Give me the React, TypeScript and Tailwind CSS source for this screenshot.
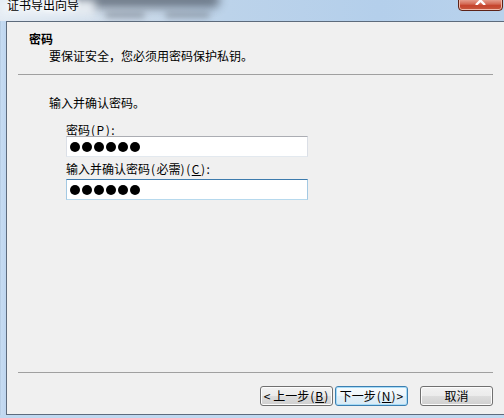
import React from "react";

const font = "font-['Noto_Sans_CJK_SC','Noto_Sans',sans-serif]";

function Dots() {
  return (
    <div className="flex items-center gap-[2px]">
      {[0, 1, 2, 3, 4, 5].map((i) => (
        <div key={i} className="w-[10px] h-[10px] rounded-full bg-black" />
      ))}
    </div>
  );
}

function Btn({ children, primary }: { children: React.ReactNode; primary?: boolean }) {
  return (
    <div
      className={
        primary
          ? "w-[73px] h-[20px] rounded-[3px] border border-[#3c7fb1] shadow-[inset_0_0_0_1px_#a6dbf7] bg-[linear-gradient(to_bottom,#f7fbfd_0%,#eef6fb_50%,#e2eff7_51%,#d9eaf5_100%)] flex items-center justify-center text-[12px] leading-[12px] text-black"
          : "w-[73px] h-[20px] rounded-[3px] border border-[#707070] shadow-[inset_0_0_0_1px_#fcfcfc] bg-[linear-gradient(to_bottom,#f2f2f2_0%,#ebebeb_50%,#dddddd_51%,#cfcfcf_100%)] flex items-center justify-center text-[12px] leading-[12px] text-black"
      }
    >
      {children}
    </div>
  );
}

export default function App() {
  return (
    <div className={`w-[504px] h-[418px] overflow-hidden flex flex-col bg-[#bcd5ee] ${font}`}>
      {/* title bar */}
      <div className="relative h-[21px] shrink-0 overflow-hidden bg-[linear-gradient(to_right,#e2eaf3_0%,#cbd9e8_25%,#bcd3ea_45%,#b4cfeb_75%,#b8d2ec_100%)]">
        <div className="absolute left-[70px] top-[-8px] w-[150px] h-[16px] rounded-full bg-[#5a6573] blur-[5px] opacity-80" />
        <div className="absolute left-[105px] top-[12px] w-[40px] h-[6px] rounded-full bg-[#7d8794] blur-[3px] opacity-70" />
        <div className="absolute left-[165px] top-[12px] w-[45px] h-[6px] rounded-full bg-[#7d8794] blur-[3px] opacity-70" />
        <div className="absolute left-0 top-0 w-[95px] h-[16px] bg-[#eef3f8] blur-[4px] opacity-90" />
        <div className="relative pl-[7px] mt-[-1px] text-[12px] leading-[12px] text-black [text-shadow:0_0_5px_white,0_0_5px_white]">
          证书导出向导
        </div>
        {/* close button */}
        <div className="absolute left-[458px] top-[-2px] w-[45px] h-[13px] rounded-b-[4px] border border-[#5c2318] bg-[linear-gradient(to_bottom,#e9a899_0%,#d46a55_45%,#c5432c_60%,#c85a40_100%)] shadow-[inset_0_0_0_1px_#f0b7a8]">
          <svg className="absolute left-[16px] top-[-3px]" width="11" height="9" viewBox="0 0 11 9">
            <path d="M1 0 L10 9 M10 0 L1 9" stroke="white" strokeWidth="2.4" />
          </svg>
        </div>
      </div>

      {/* body row */}
      <div className="flex h-[394px] shrink-0">
        <div className="w-[6px] shrink-0 bg-[linear-gradient(to_right,#a9c0d8_0px,#c7dcf2_1px,#bfd6ef_5px)]" />
        <div className="flex-1 flex flex-col border-l border-t border-b border-[#5d6b7c] bg-[#f0f0f0] text-[12px] leading-[12px] text-black">
          <div className="pt-[11px] pl-[22px] font-bold">密码</div>
          <div className="mt-[5px] pl-[42px]">要保证安全，您必须用密码保护私钥。</div>
          <div className="mt-[12px] ml-[11px] w-[475px] h-px bg-[#a0a0a0]" />

          <div className="mt-[22px] pl-[42px]">输入并确认密码。</div>
          <div className="mt-[15px] pl-[59px]">
            密码<span className="tracking-[1.5px] ml-[1px]">(<span className="underline">P</span>):</span>
          </div>
          <div className="ml-[59px] w-[242px] h-[21px] bg-white border border-t-[#abadb3] border-x-[#dbdfe6] border-b-[#e3e9ef] flex items-center pl-[3px]">
            <Dots />
          </div>
          <div className="mt-[6px] pl-[59px]">
            输入并确认密码<span className="tracking-[1.5px] ml-[1px]">(</span>必需<span className="tracking-[1.5px]">)(<span className="underline">C</span>):</span>
          </div>
          <div className="mt-[4px] ml-[59px] w-[242px] h-[21px] bg-white border border-t-[#3d7bad] border-x-[#a4c9e3] border-b-[#b7d9ed] flex items-center pl-[3px]">
            <Dots />
          </div>

          <div className="flex-1" />
          <div className="ml-[11px] w-[475px] h-px bg-[#a0a0a0]" />
          <div className="mt-[13px] mb-[8px] pl-[253px] flex">
            <Btn>
              &lt; 上一步<span className="tracking-[1px] ml-[1px]">(<span className="underline">B</span>)</span>
            </Btn>
            <div className="ml-[2px]">
              <Btn primary>
                下一步<span className="tracking-[1px] ml-[1px]">(<span className="underline">N</span>)</span> &gt;
              </Btn>
            </div>
            <div className="ml-[12px]">
              <Btn>取消</Btn>
            </div>
          </div>
        </div>
      </div>
      <div className="h-[3px] shrink-0 bg-[#c0d8f0]" />
    </div>
  );
}
